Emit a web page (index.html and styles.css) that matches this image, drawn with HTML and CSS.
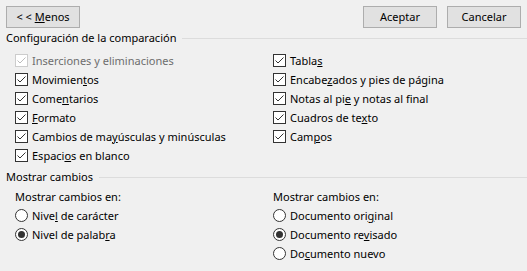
FILE: index.html
```html
<!DOCTYPE html>
<html lang="es">
<head>
<meta charset="utf-8">
<title>Comparar documentos</title>
<link rel="stylesheet" href="styles.css">
</head>
<body>
<div class="dialog">
  <div class="topbar">
    <button class="btn">&lt; &lt; <u>M</u>enos</button>
    <div class="actions">
      <button class="btn">Aceptar</button>
      <button class="btn">Cancelar</button>
    </div>
  </div>

  <div class="group-title"><span>Configuración de la comparación</span></div>
  <div class="grid checks">
    <div class="col">
      <div class="row disabled"><span class="cb"><svg viewBox="0 0 13 13" width="13" height="13"><rect x="0.5" y="0.5" width="12" height="12"/><polyline points="2.5,6.5 5,9 10.5,3.5"/></svg></span><span class="txt">Inserciones y eliminaciones</span></div>
      <div class="row"><span class="cb"><svg viewBox="0 0 13 13" width="13" height="13"><rect x="0.5" y="0.5" width="12" height="12"/><polyline points="2.5,6.5 5,9 10.5,3.5"/></svg></span><span class="txt">Movimien<u>t</u>os</span></div>
      <div class="row"><span class="cb"><svg viewBox="0 0 13 13" width="13" height="13"><rect x="0.5" y="0.5" width="12" height="12"/><polyline points="2.5,6.5 5,9 10.5,3.5"/></svg></span><span class="txt">Come<u>n</u>tarios</span></div>
      <div class="row"><span class="cb"><svg viewBox="0 0 13 13" width="13" height="13"><rect x="0.5" y="0.5" width="12" height="12"/><polyline points="2.5,6.5 5,9 10.5,3.5"/></svg></span><span class="txt"><u>F</u>ormato</span></div>
      <div class="row"><span class="cb"><svg viewBox="0 0 13 13" width="13" height="13"><rect x="0.5" y="0.5" width="12" height="12"/><polyline points="2.5,6.5 5,9 10.5,3.5"/></svg></span><span class="txt">Cambios de ma<u>y</u>úsculas y minúsculas</span></div>
      <div class="row"><span class="cb"><svg viewBox="0 0 13 13" width="13" height="13"><rect x="0.5" y="0.5" width="12" height="12"/><polyline points="2.5,6.5 5,9 10.5,3.5"/></svg></span><span class="txt">Espaci<u>o</u>s en blanco</span></div>
    </div>
    <div class="col">
      <div class="row"><span class="cb"><svg viewBox="0 0 13 13" width="13" height="13"><rect x="0.5" y="0.5" width="12" height="12"/><polyline points="2.5,6.5 5,9 10.5,3.5"/></svg></span><span class="txt">Tabla<u>s</u></span></div>
      <div class="row"><span class="cb"><svg viewBox="0 0 13 13" width="13" height="13"><rect x="0.5" y="0.5" width="12" height="12"/><polyline points="2.5,6.5 5,9 10.5,3.5"/></svg></span><span class="txt">Encabe<u>z</u>ados y pies de página</span></div>
      <div class="row"><span class="cb"><svg viewBox="0 0 13 13" width="13" height="13"><rect x="0.5" y="0.5" width="12" height="12"/><polyline points="2.5,6.5 5,9 10.5,3.5"/></svg></span><span class="txt">Notas al pi<u>e</u> y notas al final</span></div>
      <div class="row"><span class="cb"><svg viewBox="0 0 13 13" width="13" height="13"><rect x="0.5" y="0.5" width="12" height="12"/><polyline points="2.5,6.5 5,9 10.5,3.5"/></svg></span><span class="txt">Cuadros de te<u>x</u>to</span></div>
      <div class="row"><span class="cb"><svg viewBox="0 0 13 13" width="13" height="13"><rect x="0.5" y="0.5" width="12" height="12"/><polyline points="2.5,6.5 5,9 10.5,3.5"/></svg></span><span class="txt">Cam<u>p</u>os</span></div>
    </div>
  </div>

  <div class="group-title second"><span>Mostrar cambios</span></div>
  <div class="grid radios">
    <div class="col">
      <div class="row label"><span class="txt">Mostrar cambios en:</span></div>
      <div class="row"><span class="rb"><svg viewBox="0 0 13 13" width="13" height="13"><circle class="ring" cx="6.5" cy="6.5" r="6"/></svg></span><span class="txt">Nive<u>l</u> de carácter</span></div>
      <div class="row"><span class="rb"><svg viewBox="0 0 13 13" width="13" height="13"><circle class="ring" cx="6.5" cy="6.5" r="6"/><circle class="dot" cx="6.5" cy="6.5" r="3.5"/></svg></span><span class="txt">Nivel de palab<u>r</u>a</span></div>
    </div>
    <div class="col">
      <div class="row label"><span class="txt">Mostrar cambios en:</span></div>
      <div class="row"><span class="rb"><svg viewBox="0 0 13 13" width="13" height="13"><circle class="ring" cx="6.5" cy="6.5" r="6"/></svg></span><span class="txt">Documento ori<u>g</u>inal</span></div>
      <div class="row"><span class="rb"><svg viewBox="0 0 13 13" width="13" height="13"><circle class="ring" cx="6.5" cy="6.5" r="6"/><circle class="dot" cx="6.5" cy="6.5" r="3.5"/></svg></span><span class="txt">Documento re<u>v</u>isado</span></div>
      <div class="row"><span class="rb"><svg viewBox="0 0 13 13" width="13" height="13"><circle class="ring" cx="6.5" cy="6.5" r="6"/></svg></span><span class="txt">Do<u>c</u>umento nuevo</span></div>
    </div>
  </div>
</div>
</body>
</html>
```

FILE: styles.css
```css
html, body {
  margin: 0;
  padding: 0;
  background: #f0f0f0;
}

body {
  font-family: "Noto Sans", "Open Sans", sans-serif;
  font-size: 11px;
  color: #000;
}

.dialog {
  width: 527px;
  height: 271px;
  box-sizing: border-box;
}

.topbar {
  display: flex;
  justify-content: space-between;
  padding: 6px 6px 0 6px;
}

.actions {
  display: flex;
  gap: 10px;
}

.btn {
  width: 74px;
  height: 22px;
  box-sizing: border-box;
  border: 1px solid #adadad;
  background: #e1e1e1;
  font: inherit;
  color: #000;
  padding: 0 0 1px 0;
  line-height: 18px;
}

.group-title {
  display: flex;
  align-items: center;
  height: 16px;
  line-height: 16px;
  margin-top: 2px;
  padding-left: 6px;
}

.group-title::after {
  content: "";
  flex: 1;
  border-top: 1px solid #dcdcdc;
  margin-left: 6px;
}

.group-title.second {
  margin-top: 4px;
}

.grid {
  display: grid;
  grid-template-columns: 258px 1fr;
  padding-left: 15px;
}

.checks {
  margin-top: 5px;
}

.radios {
  margin-top: 2px;
}

.row {
  display: flex;
  align-items: center;
  height: 19px;
  white-space: nowrap;
}

.cb, .rb {
  display: inline-flex;
  width: 13px;
  height: 13px;
  margin-right: 4px;
}

.cb svg rect {
  fill: #fff;
  stroke: #333;
  stroke-width: 1;
}

.cb svg polyline {
  fill: none;
  stroke: #333;
  stroke-width: 1;
}

.disabled {
  color: #6d6d6d;
}

.disabled .cb svg rect {
  stroke: #cccccc;
}

.disabled .cb svg polyline {
  stroke: #bcbcbc;
}

.rb .ring {
  fill: #fff;
  stroke: #333;
  stroke-width: 1;
}

.rb .dot {
  fill: #333;
}

u {
  text-decoration-thickness: 1px;
  text-underline-offset: 1px;
}
```
